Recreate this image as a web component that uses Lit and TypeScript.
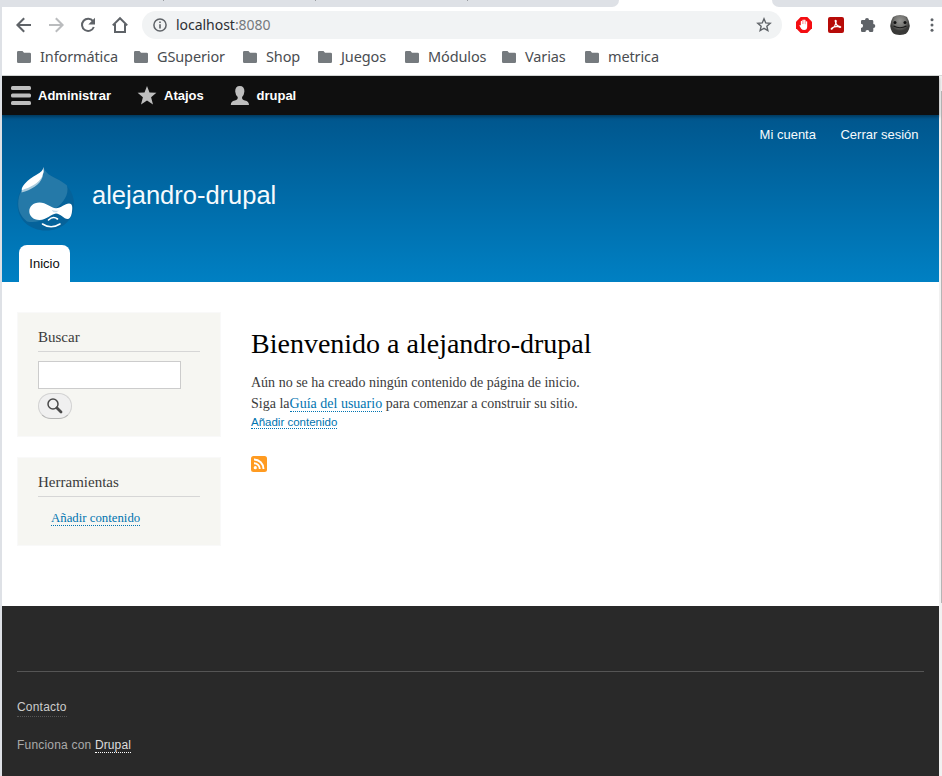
import { LitElement, html, css, svg } from "lit";
import { customElement } from "lit/decorators.js";

const bookmarks = ["Informática", "GSuperior", "Shop", "Juegos", "Módulos", "Varias", "metrica"];

@customElement("browser-chrome")
class BrowserChrome extends LitElement {
  static styles = css`
    :host { display: block; height: 76px; box-sizing: border-box; background: #fff; border-bottom: 1px solid #d5d8d7; font-family: "Noto Sans", sans-serif; }
    svg { display: block; flex: none; }
    .tabs { height: 7px; display: flex; justify-content: space-between; background: #fff; }
    .left { width: 617px; background: #dee1e6; border-bottom-right-radius: 7px; display: flex; }
    .left i { width: 1px; height: 1px; background: #9a9da1; margin-left: 151px; }
    .left i:first-child { margin-left: 161px; }
    .right { width: 170px; background: #dee1e6; border-bottom-left-radius: 7px; }
    .nav { height: 36px; display: flex; align-items: center; padding-left: 12px; }
    .nav > svg { margin-right: 12px; }
    .omni { width: 640px; height: 28px; border-radius: 14px; background: #f1f3f4; display: flex; align-items: center; box-sizing: border-box; padding: 0 10px 0 11px; flex: none; }
    .url { margin-left: 9px; flex: 1; font-size: 14px; letter-spacing: -0.03px; line-height: 28px; color: #2c2f33; }
    .url span { color: #75797d; }
    .ext { display: flex; align-items: center; margin-left: 14px; gap: 16px; }
    .ext svg:last-child { margin-left: -2px; }
    .nav > .more { margin: 0 0 0 20px; }
    .marks { display: grid; grid-template-columns: 117px 109px 75px 87px 97px 83px auto; padding: 2px 0 0 15px; height: 24px; }
    .mark { display: flex; align-items: center; gap: 9px; font-size: 14.5px; line-height: 22px; height: 24px; color: #4a4d51; letter-spacing: -0.12px; white-space: nowrap; }
    .mark span { height: 24px; }
  `;
  render() {
    return html`
      <div class="tabs"><div class="left"><i></i><i></i><i></i></div><div class="right"></div></div>
      <div class="nav">
        <svg width="20" height="20" viewBox="0 0 20 20" fill="none" stroke="#5f6368" stroke-width="2"><path d="M17 10H4M10.2 3.2L3.4 10l6.8 6.8"/></svg>
        <svg width="20" height="20" viewBox="0 0 20 20" fill="none" stroke="#babcbe" stroke-width="2"><path d="M3 10h13M9.8 3.2l6.8 6.8-6.8 6.8"/></svg>
        <svg width="20" height="20" viewBox="0 0 20 20"><path d="M15 6.2A6.1 6.1 0 1 0 15.8 12" fill="none" stroke="#5f6368" stroke-width="2"/><path d="M17 2.8v6.7h-6.7z" fill="#5f6368"/></svg>
        <svg width="20" height="20" viewBox="0 0 20 20" fill="none" stroke="#5f6368" stroke-width="2"><path d="M2.8 10.4L10 3.2l7.2 7.2M5 9v8h10V9"/></svg>
        <div class="omni">
          <svg width="14" height="14" viewBox="0 0 14 14"><circle cx="7" cy="7" r="6.1" fill="none" stroke="#5f6368" stroke-width="1.5"/><path d="M6.2 6.2h1.6v4.2H6.2zM6.2 3.5h1.6v1.6H6.2z" fill="#5f6368"/></svg>
          <div class="url">localhost<span>:8080</span></div>
          <svg width="16" height="16" viewBox="0 0 16 16"><path d="M8 1.8l1.75 4.1 4.45.4-3.35 2.95 1 4.35L8 11.3l-3.85 2.3 1-4.35L1.8 6.3l4.45-.4z" fill="none" stroke="#5f6368" stroke-width="1.4"/></svg>
        </div>
        <div class="ext">
          <svg width="16" height="16" viewBox="0 0 16 16"><path d="M4.7 0h6.6L16 4.7v6.6L11.3 16H4.7L0 11.3V4.7z" fill="#f40d12"/><path d="M4.8 8.500V4.200q.7-.8 1.300 0V7h.3V3q.7-.8 1.400 0v4h.3V3q.7-.8 1.400 0v4.300h.3V4.600q.7-.8 1.400 0V9.500q0 3.600-3 3.600-2 0-3-1.300L3.300 8.600Q4 7.500 4.800 8.500z" fill="#fff"/></svg>
          <svg width="16" height="16" viewBox="0 0 16 16"><rect width="16" height="16" rx="2" fill="#b70b08"/><path d="M7.200 3.400q1.300-.6 1 1.400-.8 4.300-4.200 7.300-1.300.2-.6-.7 2.600-2.300 8.700-2 1.400.5 0 1-2.700-.5-4.500-4.600-.6-1.800-.4-2.400z" fill="none" stroke="#fff" stroke-width="1.100"/></svg>
          <svg width="16" height="16" viewBox="0 0 16 16"><path d="M5 2.900a2 2 0 0 1 4 0h3q1.300 0 1.300 1.300v2.800a2 2 0 0 1 0 4v2.700q0 1.200-1.300 1.200H9.400a2 2 0 0 0-4 0H2.200Q1 14.900 1 13.700V10.900a2.100 2.100 0 0 0 0-4.200V4.200Q1 2.900 2.200 2.900z" fill="#5f6368"/></svg>
          <svg width="20" height="20" viewBox="0 0 20 20"><defs><radialGradient id="g" cy=".3"><stop stop-color="#969693"/><stop offset=".6" stop-color="#747471"/><stop offset="1" stop-color="#3a3a38"/></radialGradient></defs><path d="M3 2Q10-2 17 2q2 3 2.800 9-1 7-6 8.600-4 .6-8 0Q1 18 .2 11 1 5 3 2z" fill="url(#g)"/><circle cx="5" cy="7.500" r="1.500" fill="#111"/><circle cx="15" cy="7.500" r="1.500" fill="#111"/><path d="M3.500 11Q10 14.500 16.500 11" fill="none" stroke="#181818" stroke-width="1.200"/><path d="M4 17.500q6 1.500 12 0" fill="none" stroke="#3a3a38" stroke-width="2"/></svg>
        </div>
        <svg class="more" width="4" height="14" viewBox="0 0 4 14" fill="#5f6368"><circle cx="2" cy="1.800" r="1.500"/><circle cx="2" cy="7" r="1.500"/><circle cx="2" cy="12.200" r="1.500"/></svg>
      </div>
      <div class="marks">${bookmarks.map((b) => html`<div class="mark"><svg width="14" height="12" viewBox="0 0 14 12"><path d="M1.300 0H5.500L7 1.700h5.700Q14 1.700 14 3v7.700Q14 12 12.700 12H1.300Q0 12 0 10.700V1.300Q0 0 1.300 0z" fill="#757a7e"/></svg><span>${b}</span></div>`)}</div>
    `;
  }
}

const adminIcons = [
  svg`<g fill="#bebebe"><rect x="0" y="0" width="20" height="4" rx="1.500"/><rect x="0" y="7.500" width="20" height="4" rx="1.500"/><rect x="0" y="15" width="20" height="4" rx="1.500"/></g>`,
  svg`<path d="M10 0l2.500 6.600 6.900.2-5.300 4.500 1.900 7.200L10 14.500l-6 4 1.900-7.200L.6 6.800l6.900-.2z" fill="#bebebe"/>`,
  svg`<path d="M5.200 5.600Q5 0 9.800 0t4.600 5.600q-.3 3.600-2.300 5.400-.5 2.600 2.800 3.500 4 .9 4.100 4.500H.8q0-3.600 4-4.500 3.400-.9 2.900-3.500-2.200-1.800-2.500-5.400z" fill="#bebebe"/>`,
];

@customElement("admin-bar")
class AdminBar extends LitElement {
  static styles = css`
    :host { display: grid; grid-template-columns: 126px 92.500px auto; align-items: center; height: 39px; padding-left: 9px; background: #0f0f0f; position: relative; box-shadow: 0 2px 3px rgba(0,0,0,.35); }
    .item { display: flex; align-items: center; gap: 7px; font: bold 13px/39px "Liberation Sans", sans-serif; color: #fff; }
    svg { display: block; }
  `;
  render() {
    return ["Administrar", "Atajos", "drupal"].map(
      (t, i) => html`<div class="item"><svg width="20" height="19" viewBox="0 0 20 19">${adminIcons[i]}</svg>${t}</div>`
    );
  }
}

@customElement("site-header")
class SiteHeader extends LitElement {
  static styles = css`
    :host { display: flex; flex-direction: column; height: 167px; background: linear-gradient(#00568d, #0080c3); color: #f6fafd; font-family: "Liberation Sans", sans-serif; }
    .account { display: flex; justify-content: flex-end; gap: 24.500px; padding: 10px 20.500px 0 0; font-size: 13px; line-height: 19px; }
    .brand { display: flex; padding: 22px 0 0 15px; height: 79px; }
    .name { font-size: 25.500px; line-height: 30px; margin: 14px 0 0 17px; }
    .tab { margin: 0 0 0 17px; width: 51px; height: 37px; background: #fff; color: #0d0d0d; border-radius: 8px 8px 0 0; text-align: center; font-size: 13px; line-height: 38px; }
    svg { display: block; }
  `;
  render() {
    return html`
      <div class="account"><span>Mi cuenta</span><span>Cerrar sesión</span></div>
      <div class="brand">
        <svg width="58" height="66" viewBox="0 -1 58 66">
          <path d="M26.700 0C28 6 32 8 39 11 50 17 57 25 57 37 57 53 45 63.500 29 63.500S.500 53 .5 37C.5 27 5 20 12 13 19 7 26 7 26.700 0z" fill="#05629a"/>
          <path d="M26.700 1C29 6.500 34 9 39 11.500 44 14 48 16.500 50 18.500 52.500 28 46 36 38 42 32 51 22 57 10 54.500 4 49.500 1.200 44 1.200 37 1.200 27 5.500 20 12.500 13.500 19 8 26 8 26.700 1z" fill="#2579a8"/>
          <path d="M25.500 10C23 18 14 23 4.500 25.500L5 22Q19 18 25.500 8z" fill="#a9cbdd"/>
          <path d="M26.500-.2Q27.500 5 25.200 9.500C21.500 16.500 13 20.500 4.800 23.200Q4.200 20.500 8 16.500C11.500 12.500 15.500 9.800 19.500 7.700 24 5.300 26 3.500 26.500-.2z" fill="#fff"/>
          <path d="M22.500 35.500C29 35.500 34 41 39 41.300 44 41 48 36.500 52 36.500 56 36.500 55.500 41.500 54.800 46 54 50 52.500 52 50.500 52 47 52 43.500 46.800 39 46.500 34 47 29.500 53 22.500 53 16 53 12.300 49 12.300 44.300S16 35.500 22.500 35.500z" fill="#fff"/>
          <path d="M34.500 42.800Q38 44.500 42 43.500L39.500 45.300 36.500 45.300z" fill="#c5dceb"/>
          <path d="M25.500 57q8.500 5.500 17.500 0M31.500 53q4.500-4.500 9-1" fill="none" stroke="#fff" stroke-width="1.600" stroke-linecap="round"/>
        </svg>
        <div class="name">alejandro-drupal</div>
      </div>
      <div class="tab">Inicio</div>
    `;
  }
}

@customElement("app-root")
class AppRoot extends LitElement {
  static styles = css`
    :host { display: block; width: 942px; height: 776px; overflow: hidden; background: #fff; box-sizing: border-box; border-left: 2px solid #dee1e6; font-family: "Liberation Serif", serif; color: #3b3b3b; }
    .view { display: flex; height: 700px; }
    .page { width: 937px; display: flex; flex-direction: column; }
    .scroll { flex: 1; background: #f1f1f1; padding-top: 15px; box-sizing: border-box; display: flex; justify-content: flex-end; }
    .thumb { width: 1px; background: #b5b5b5; height: 512px; }
    .main { display: flex; height: 324px; box-sizing: border-box; padding: 30px 0 0 15px; gap: 30px; }
    .side { width: 204px; display: flex; flex-direction: column; gap: 20px; }
    .block { background: #f6f6f2; border: 1px solid #f9f9f9; box-sizing: border-box; padding: 14px 20px 0; }
    .search { height: 125px; }
    .tools { height: 89px; }
    h2 { margin: 0; font-weight: normal; font-size: 15px; line-height: 20px; padding-bottom: 4px; border-bottom: 1px solid #d6d6d6; }
    .field { width: 143px; height: 28px; box-sizing: border-box; background: #fff; border: 1px solid #ccc; margin-top: 9px; }
    .go { width: 34px; height: 26px; box-sizing: border-box; border: 1px solid #d2d2d2; border-bottom-color: #b4b4b4; border-radius: 13px; background: #f0f0f0; margin-top: 4px; display: flex; justify-content: center; padding-top: 4px; }
    .link { color: #0074b0; border-bottom: 1px dotted #0074b0; }
    .tools .link { display: inline-block; font-size: 12.800px; line-height: 14px; margin: 14px 0 0 13px; }
    .content { padding-top: 15px; }
    h1 { margin: 0 0 11px; font-weight: normal; font-size: 28px; line-height: 34px; color: #000; }
    p { margin: 0; font-size: 14px; line-height: 21px; letter-spacing: .005px; }
    .add { display: table; font: 11.500px/12px "Liberation Sans", sans-serif; margin: 2px 0 27px; }
    svg { display: block; }
    .foot { flex: 1; background: #292929; padding: 65px 15px 0; font: 12px/15px "Liberation Sans", sans-serif; letter-spacing: .2px; color: #aaa; }
    .rule { height: 1px; background: #555; margin-bottom: 28px; }
    .contact { display: table; color: #ccc; border-bottom: 1px dotted #555; padding-bottom: 1px; margin-bottom: 21px; }
    .drupal { color: #ddd; border-bottom: 1px dotted #fff; letter-spacing: .1px; }
  `;
  render() {
    return html`
      <browser-chrome></browser-chrome>
      <div class="view">
        <div class="page">
          <admin-bar></admin-bar>
          <site-header></site-header>
          <div class="main">
            <div class="side">
              <div class="block search">
                <h2>Buscar</h2>
                <div class="field"></div>
                <div class="go"><svg width="16" height="16" viewBox="0 0 16 16" fill="none" stroke="#4a4a4a"><circle cx="6" cy="6" r="5" stroke-width="1.500"/><path d="M10 10l4 4" stroke-width="2.800" stroke-linecap="round"/></svg></div>
              </div>
              <div class="block tools"><h2>Herramientas</h2><span class="link">Añadir contenido</span></div>
            </div>
            <div class="content">
              <h1>Bienvenido a alejandro-drupal</h1>
              <p>Aún no se ha creado ningún contenido de página de inicio.</p>
              <p>Siga la<span class="link">Guía del usuario</span> para comenzar a construir su sitio.</p>
              <span class="link add">Añadir contenido</span>
              <svg width="16" height="16" viewBox="0 0 16 16"><rect width="16" height="16" rx="2.500" fill="#ff9b21"/><circle cx="4.300" cy="11.700" r="1.600" fill="#fff"/><path d="M3 7.200a5.800 5.800 0 0 1 5.800 5.800M3 3.500a9.500 9.500 0 0 1 9.500 9.500" fill="none" stroke="#fff" stroke-width="1.900"/></svg>
            </div>
          </div>
          <div class="foot">
            <div class="rule"></div>
            <span class="contact">Contacto</span>
            <div>Funciona con <span class="drupal">Drupal</span></div>
          </div>
        </div>
        <div class="scroll"><div class="thumb"></div></div>
      </div>
    `;
  }
}
